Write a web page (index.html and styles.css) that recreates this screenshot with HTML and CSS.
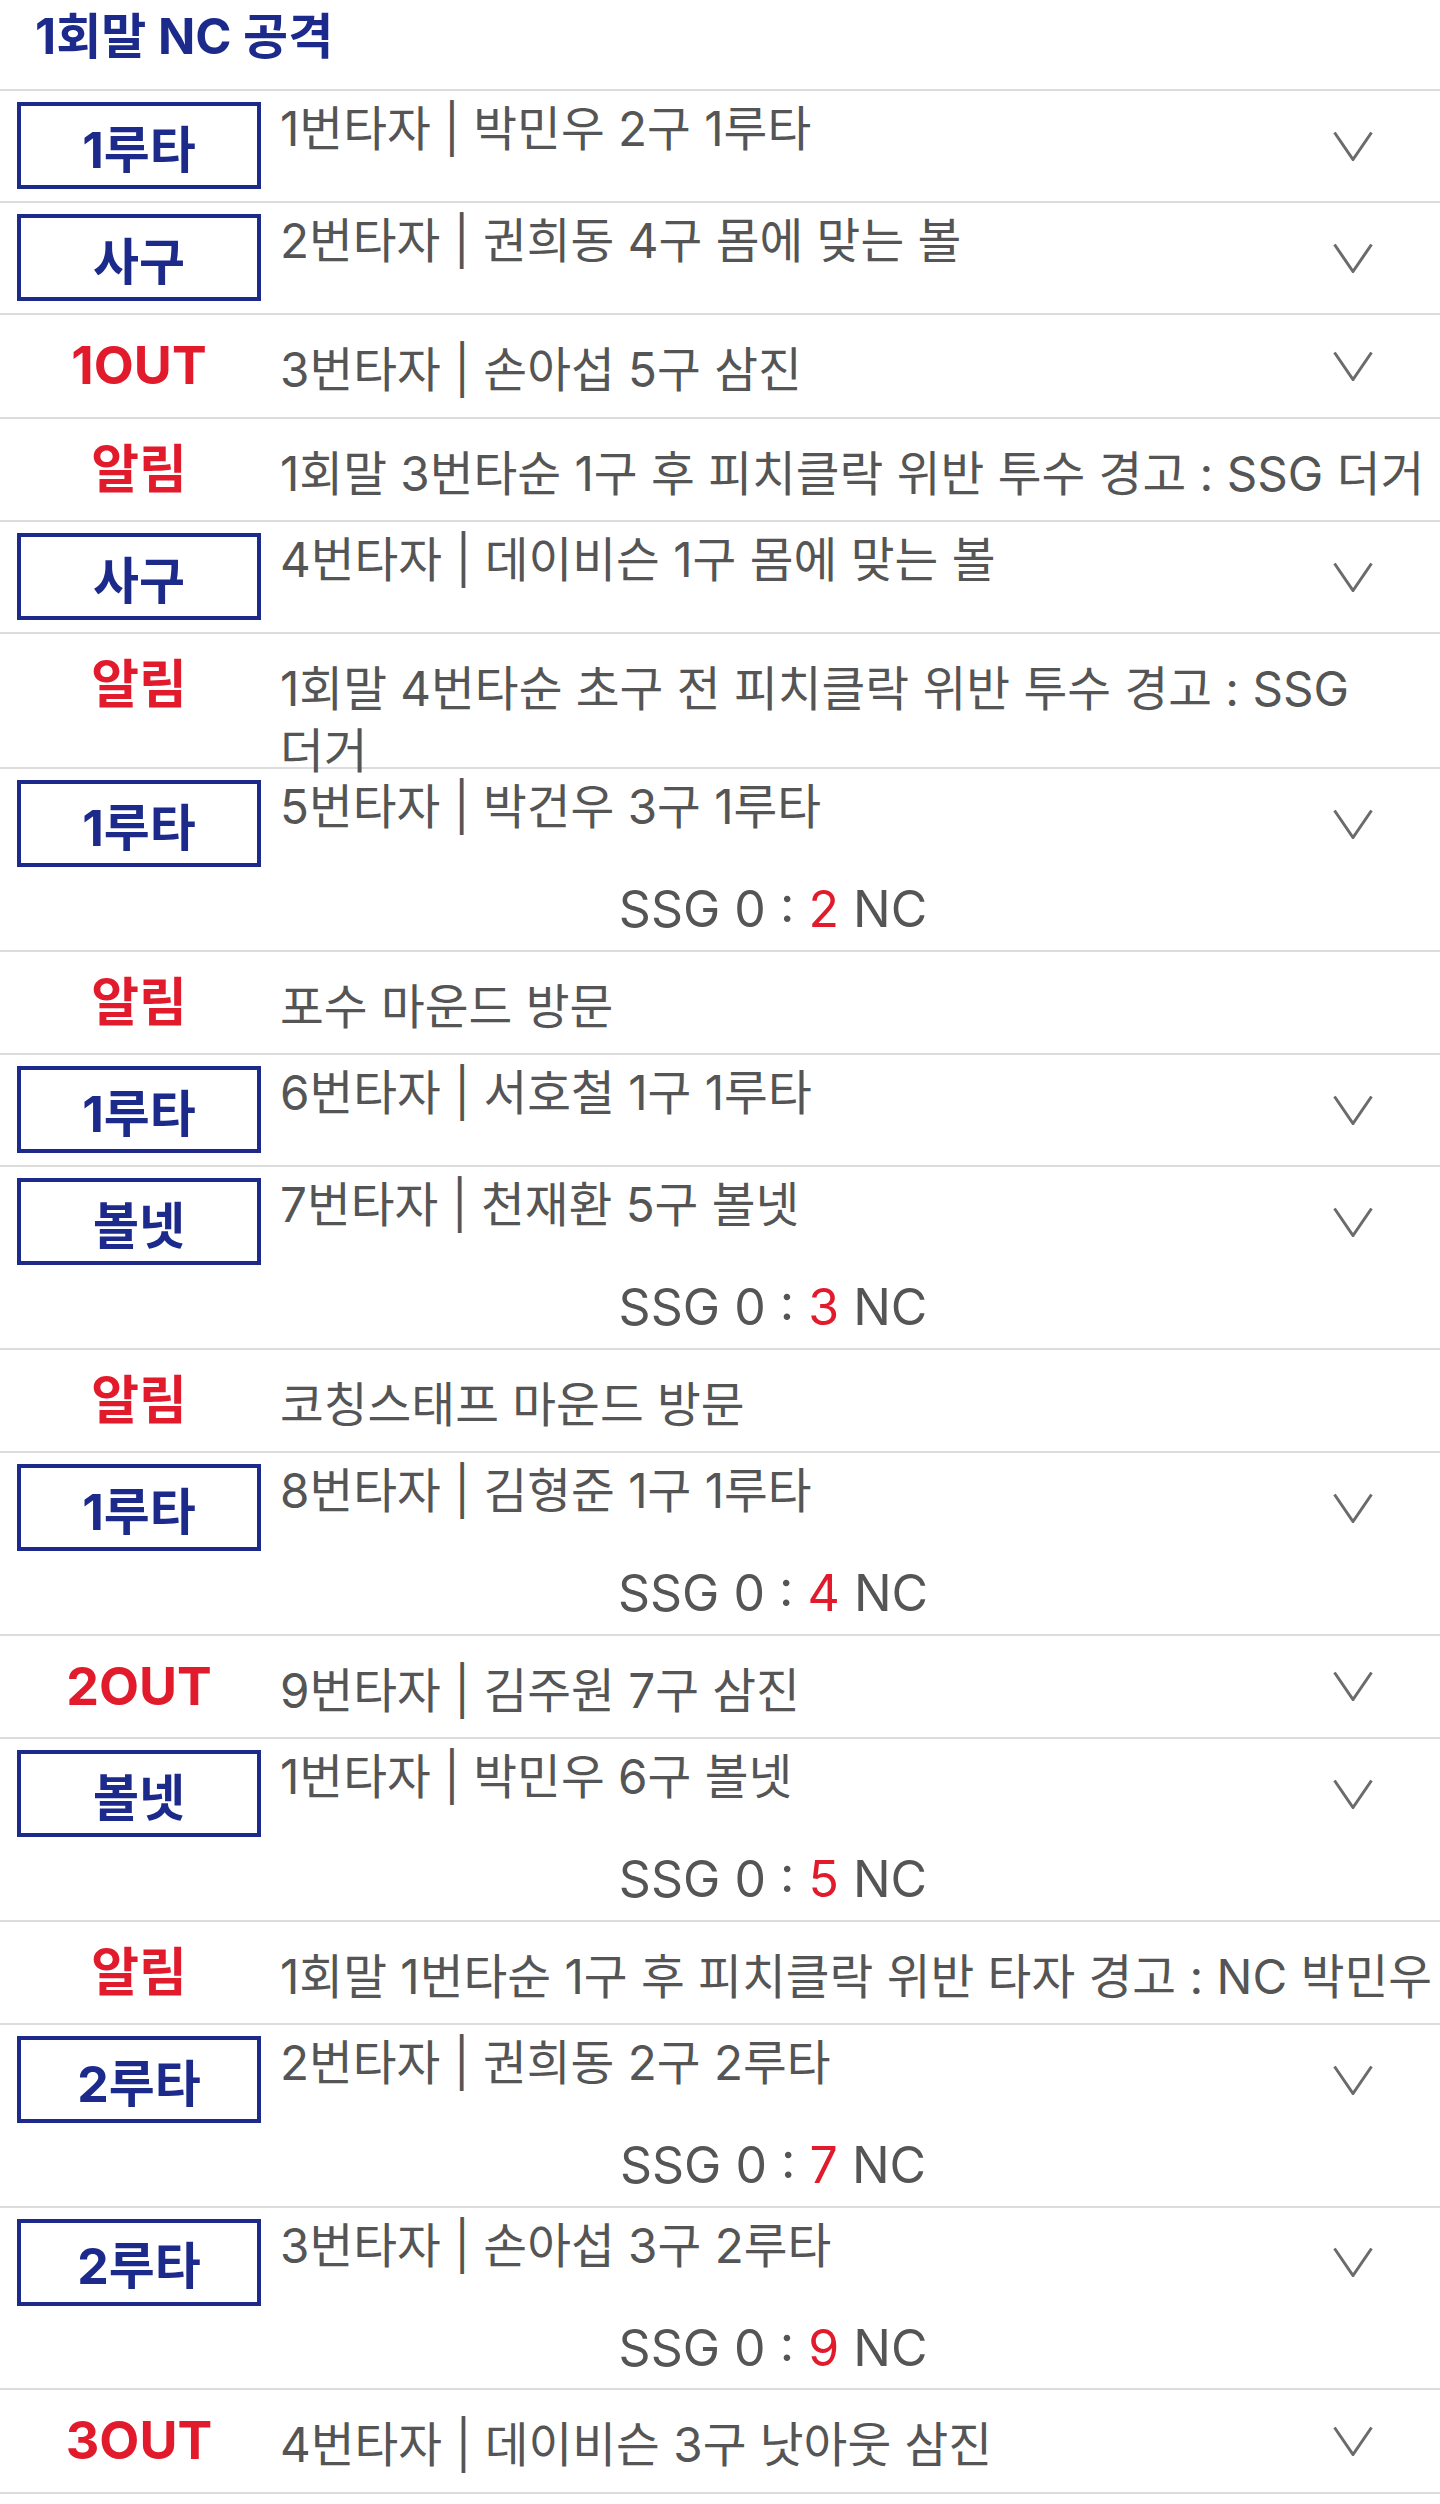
FILE: index.html
```html
<!DOCTYPE html>
<html lang="ko">
<head>
  <meta charset="UTF-8" />
  <meta name="viewport" content="width=device-width, initial-scale=1.0"/>
  <title>문자중계</title>
  <link rel="stylesheet" href="styles.css">
</head>
<body>

  <div class="inning">
    <h2 class="inning-title">1회말 NC 공격</h2>

    <ul class="plays">
      <li class="play">
        <div class="play-main">
          <div class="play-label"><span class="badge">1루타</span></div>
          <p class="play-text">1번타자 | 박민우 2구 1루타</p>
          <div class="play-toggle"><svg viewBox="0 0 40 30"><polyline points="1.5,1.5 20,28.5 38.5,1.5"/></svg></div>
        </div>
      </li>

      <li class="play">
        <div class="play-main">
          <div class="play-label"><span class="badge">사구</span></div>
          <p class="play-text">2번타자 | 권희동 4구 몸에 맞는 볼</p>
          <div class="play-toggle"><svg viewBox="0 0 40 30"><polyline points="1.5,1.5 20,28.5 38.5,1.5"/></svg></div>
        </div>
      </li>

      <li class="play plain">
        <div class="play-main">
          <div class="play-label"><span class="result">1OUT</span></div>
          <p class="play-text">3번타자 | 손아섭 5구 삼진</p>
          <div class="play-toggle"><svg viewBox="0 0 40 30"><polyline points="1.5,1.5 20,28.5 38.5,1.5"/></svg></div>
        </div>
      </li>

      <li class="play plain">
        <div class="play-main">
          <div class="play-label"><span class="result">알림</span></div>
          <p class="play-text">1회말 3번타순 1구 후 피치클락 위반 투수 경고 : SSG 더거</p>
        </div>
      </li>

      <li class="play">
        <div class="play-main">
          <div class="play-label"><span class="badge">사구</span></div>
          <p class="play-text">4번타자 | 데이비슨 1구 몸에 맞는 볼</p>
          <div class="play-toggle"><svg viewBox="0 0 40 30"><polyline points="1.5,1.5 20,28.5 38.5,1.5"/></svg></div>
        </div>
      </li>

      <li class="play plain">
        <div class="play-main">
          <div class="play-label"><span class="result">알림</span></div>
          <p class="play-text">1회말 4번타순 초구 전 피치클락 위반 투수 경고 : SSG 더거</p>
        </div>
      </li>

      <li class="play">
        <div class="play-main">
          <div class="play-label"><span class="badge">1루타</span></div>
          <p class="play-text">5번타자 | 박건우 3구 1루타</p>
          <div class="play-toggle"><svg viewBox="0 0 40 30"><polyline points="1.5,1.5 20,28.5 38.5,1.5"/></svg></div>
        </div>
        <p class="score">SSG 0 : <span class="run">2</span> NC</p>
      </li>

      <li class="play plain">
        <div class="play-main">
          <div class="play-label"><span class="result">알림</span></div>
          <p class="play-text">포수 마운드 방문</p>
        </div>
      </li>

      <li class="play">
        <div class="play-main">
          <div class="play-label"><span class="badge">1루타</span></div>
          <p class="play-text">6번타자 | 서호철 1구 1루타</p>
          <div class="play-toggle"><svg viewBox="0 0 40 30"><polyline points="1.5,1.5 20,28.5 38.5,1.5"/></svg></div>
        </div>
      </li>

      <li class="play">
        <div class="play-main">
          <div class="play-label"><span class="badge">볼넷</span></div>
          <p class="play-text">7번타자 | 천재환 5구 볼넷</p>
          <div class="play-toggle"><svg viewBox="0 0 40 30"><polyline points="1.5,1.5 20,28.5 38.5,1.5"/></svg></div>
        </div>
        <p class="score">SSG 0 : <span class="run">3</span> NC</p>
      </li>

      <li class="play plain">
        <div class="play-main">
          <div class="play-label"><span class="result">알림</span></div>
          <p class="play-text">코칭스태프 마운드 방문</p>
        </div>
      </li>

      <li class="play">
        <div class="play-main">
          <div class="play-label"><span class="badge">1루타</span></div>
          <p class="play-text">8번타자 | 김형준 1구 1루타</p>
          <div class="play-toggle"><svg viewBox="0 0 40 30"><polyline points="1.5,1.5 20,28.5 38.5,1.5"/></svg></div>
        </div>
        <p class="score">SSG 0 : <span class="run">4</span> NC</p>
      </li>

      <li class="play plain">
        <div class="play-main">
          <div class="play-label"><span class="result">2OUT</span></div>
          <p class="play-text">9번타자 | 김주원 7구 삼진</p>
          <div class="play-toggle"><svg viewBox="0 0 40 30"><polyline points="1.5,1.5 20,28.5 38.5,1.5"/></svg></div>
        </div>
      </li>

      <li class="play">
        <div class="play-main">
          <div class="play-label"><span class="badge">볼넷</span></div>
          <p class="play-text">1번타자 | 박민우 6구 볼넷</p>
          <div class="play-toggle"><svg viewBox="0 0 40 30"><polyline points="1.5,1.5 20,28.5 38.5,1.5"/></svg></div>
        </div>
        <p class="score">SSG 0 : <span class="run">5</span> NC</p>
      </li>

      <li class="play plain">
        <div class="play-main">
          <div class="play-label"><span class="result">알림</span></div>
          <p class="play-text">1회말 1번타순 1구 후 피치클락 위반 타자 경고 : NC 박민우</p>
        </div>
      </li>

      <li class="play">
        <div class="play-main">
          <div class="play-label"><span class="badge">2루타</span></div>
          <p class="play-text">2번타자 | 권희동 2구 2루타</p>
          <div class="play-toggle"><svg viewBox="0 0 40 30"><polyline points="1.5,1.5 20,28.5 38.5,1.5"/></svg></div>
        </div>
        <p class="score">SSG 0 : <span class="run">7</span> NC</p>
      </li>

      <li class="play">
        <div class="play-main">
          <div class="play-label"><span class="badge">2루타</span></div>
          <p class="play-text">3번타자 | 손아섭 3구 2루타</p>
          <div class="play-toggle"><svg viewBox="0 0 40 30"><polyline points="1.5,1.5 20,28.5 38.5,1.5"/></svg></div>
        </div>
        <p class="score">SSG 0 : <span class="run">9</span> NC</p>
      </li>

      <li class="play plain">
        <div class="play-main">
          <div class="play-label"><span class="result">3OUT</span></div>
          <p class="play-text">4번타자 | 데이비슨 3구 낫아웃 삼진</p>
          <div class="play-toggle"><svg viewBox="0 0 40 30"><polyline points="1.5,1.5 20,28.5 38.5,1.5"/></svg></div>
        </div>
      </li>
    </ul>
  </div>

</body>
</html>
```

FILE: styles.css
```css
body {
  margin: 0;
  background: #ffffff;
  font-family: "Inter", "Noto Sans CJK KR", sans-serif;
  font-size: 47.6px;
  color: #555555;
}

.inning-title {
  margin: 0;
  padding: 6px 0 21px 35px;
  font-size: 49px;
  line-height: 62px;
  font-weight: 700;
  color: #1c2b8b;
  border-bottom: 2px solid #dcdcdc;
}

.plays {
  list-style: none;
  margin: 0;
  padding: 0;
}

.play {
  border-bottom: 2px solid #dcdcdc;
}

.play-main {
  display: flex;
  align-items: flex-start;
  padding: 11px 0 12px;
}

.play-label {
  flex: 0 0 244px;
  margin: 0 19px 0 17px;
  display: flex;
  justify-content: center;
}

.badge {
  box-sizing: border-box;
  width: 244px;
  height: 87px;
  border: 4px solid #1c2b8b;
  display: flex;
  align-items: center;
  justify-content: center;
  color: #1c2b8b;
  font-weight: 700;
  font-size: 50px;
}

.play-text {
  flex: 1;
  margin: -4px 0 0;
  line-height: 62px;
  word-break: keep-all;
}

.play-toggle {
  flex: 0 0 174px;
  align-self: center;
  display: flex;
  justify-content: center;
}

.play-toggle svg {
  width: 40px;
  height: 30px;
  fill: none;
  stroke: #6b6b6b;
  stroke-width: 3;
}

/* rows without a boxed badge: outs and notices */
.plain .play-main {
  box-sizing: border-box;
  min-height: 101.5px;
  padding: 0;
}

.plain .play-label {
  padding-top: 20px;
  line-height: 62px;
}

.plain .play-text {
  margin: 0 0 -15px;
  padding-top: 24px;
}

.result {
  color: #e11a2c;
  font-weight: 700;
  font-size: 52px;
}

.score {
  margin: 0 174px 0 280px;
  height: 70.5px;
  box-sizing: border-box;
  padding-top: 3px;
  line-height: 54px;
  font-size: 50px;
  text-align: center;
}

.run {
  color: #e11a2c;
}
```
